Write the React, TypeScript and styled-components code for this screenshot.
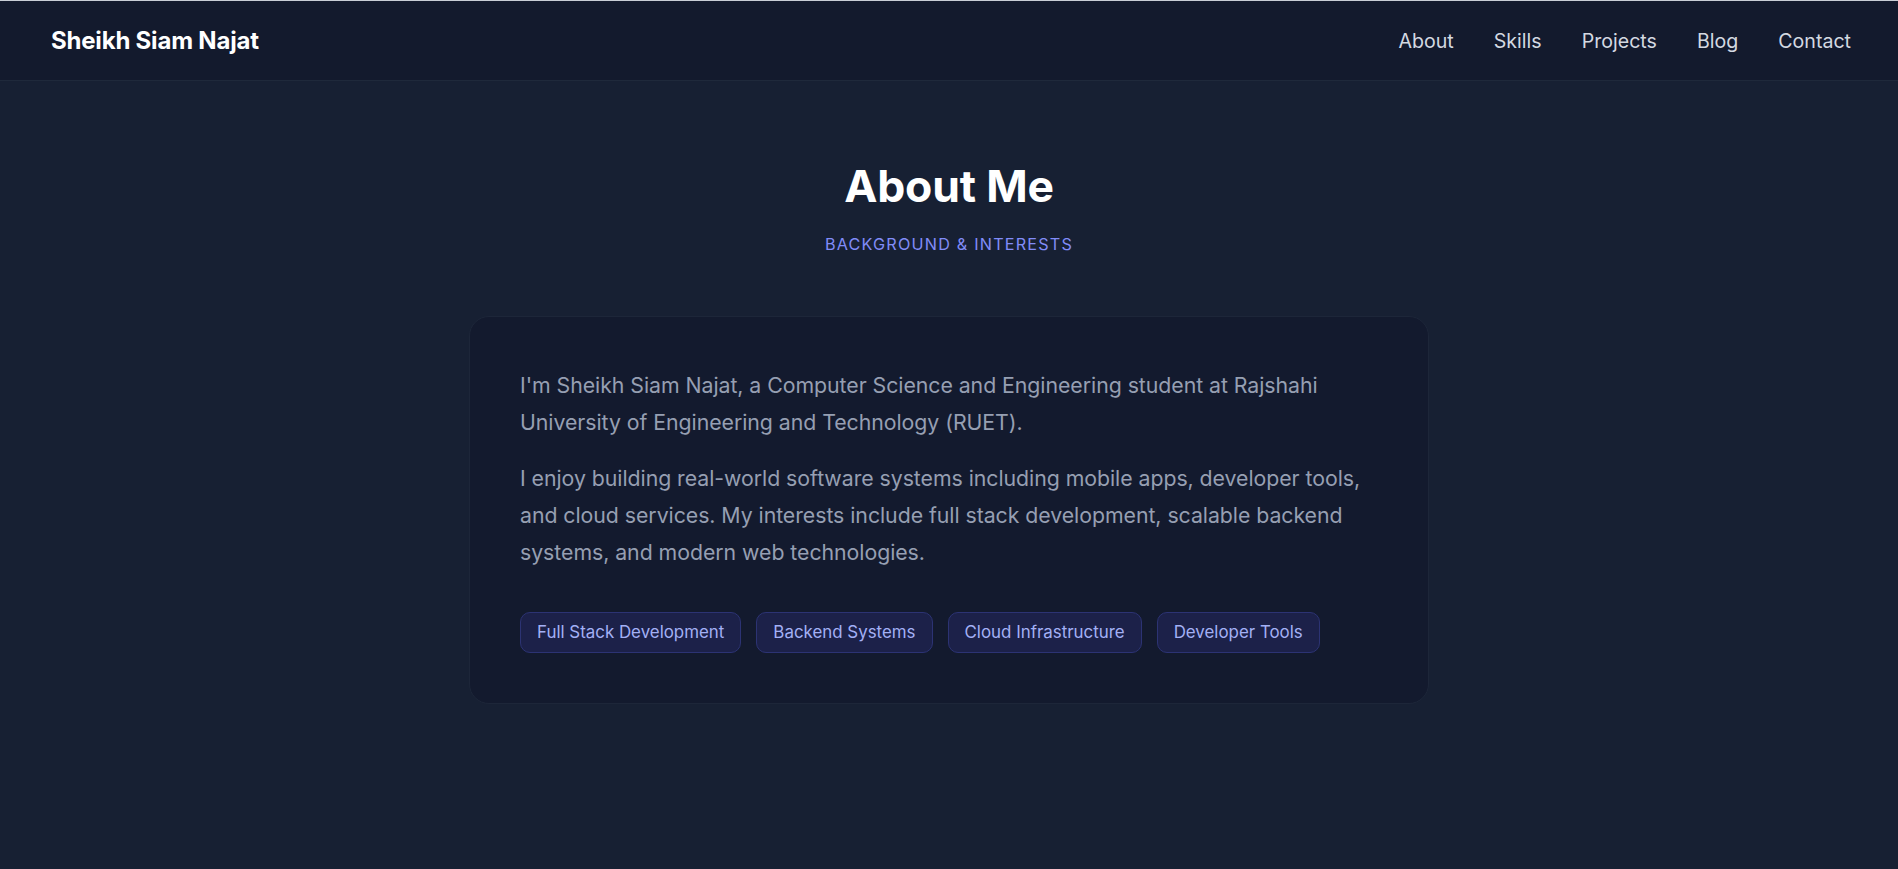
import React from 'react';
import styled, { createGlobalStyle } from 'styled-components';

const GlobalStyle = createGlobalStyle`
  *, *::before, *::after {
    box-sizing: border-box;
  }

  html, body {
    margin: 0;
    padding: 0;
    background: #172033;
  }

  body {
    font-family: Inter, 'Noto Sans', sans-serif;
    color: #e2e8f0;
    -webkit-font-smoothing: antialiased;
  }
`;

const NAV_LINKS = ['About', 'Skills', 'Projects', 'Blog', 'Contact'];

const INTERESTS = [
  'Full Stack Development',
  'Backend Systems',
  'Cloud Infrastructure',
  'Developer Tools',
];

const Page = styled.div`
  min-height: 100vh;
  display: flex;
  flex-direction: column;
  background: #172033;
`;

const Header = styled.header`
  height: 81px;
  display: flex;
  align-items: center;
  justify-content: space-between;
  padding: 0 47px 0 51px;
  background: #131a2d;
  border-top: 1px solid #c9ced6;
  border-bottom: 1px solid #1f293b;
`;

const Logo = styled.a`
  font-size: 24px;
  font-weight: 700;
  letter-spacing: -0.2px;
  color: #ffffff;
  text-decoration: none;
`;

const Nav = styled.nav`
  display: flex;
  align-items: center;
  gap: 40px;
`;

const NavLink = styled.a`
  font-size: 19.6px;
  font-weight: 400;
  color: #d4d9e1;
  text-decoration: none;
`;

const Section = styled.section`
  display: flex;
  flex-direction: column;
  align-items: center;
  padding: 79px 24px 80px;
`;

const Title = styled.h1`
  margin: 0;
  font-size: 44.5px;
  line-height: 1.2;
  font-weight: 700;
  letter-spacing: -0.2px;
  color: #ffffff;
`;

const Subtitle = styled.p`
  margin: 19px 0 0;
  font-size: 16.2px;
  line-height: 24px;
  font-weight: 400;
  letter-spacing: 1.2px;
  text-transform: uppercase;
  color: #818cf8;
`;

const Card = styled.div`
  width: 960px;
  margin-top: 60px;
  padding: 50px 49px 50px 50px;
  background: #131a2e;
  border: 1px solid #1d2639;
  border-radius: 20px;
`;

const Paragraph = styled.p`
  margin: 0 0 19px;
  font-size: 21.3px;
  line-height: 37px;
  letter-spacing: -0.05px;
  color: #969fb2;

  &:last-of-type {
    margin-bottom: 0;
  }
`;

const TagList = styled.ul`
  list-style: none;
  display: flex;
  flex-wrap: wrap;
  gap: 15px;
  margin: 41px 0 0;
  padding: 0;
`;

const Tag = styled.li`
  padding: 10px 16px;
  font-size: 16.9px;
  line-height: 19px;
  color: #a3b0f5;
  background: #1c2149;
  border: 1px solid #2c3373;
  border-radius: 10px;
`;

const App: React.FC = () => {
  return (
    <>
      <GlobalStyle />
      <Page>
        <Header>
          <Logo href="#">Sheikh Siam Najat</Logo>
          <Nav>
            {NAV_LINKS.map((link) => (
              <NavLink key={link} href={`#${link.toLowerCase()}`}>
                {link}
              </NavLink>
            ))}
          </Nav>
        </Header>
        <Section id="about">
          <Title>About Me</Title>
          <Subtitle>Background &amp; Interests</Subtitle>
          <Card>
            <Paragraph>
              I'm Sheikh Siam Najat, a Computer Science and Engineering student
              at Rajshahi University of Engineering and Technology (RUET).
            </Paragraph>
            <Paragraph>
              I enjoy building real-world software systems including mobile
              apps, developer tools, and cloud services. My interests include
              full stack development, scalable backend systems, and modern web
              technologies.
            </Paragraph>
            <TagList>
              {INTERESTS.map((interest) => (
                <Tag key={interest}>{interest}</Tag>
              ))}
            </TagList>
          </Card>
        </Section>
      </Page>
    </>
  );
};

export default App;
